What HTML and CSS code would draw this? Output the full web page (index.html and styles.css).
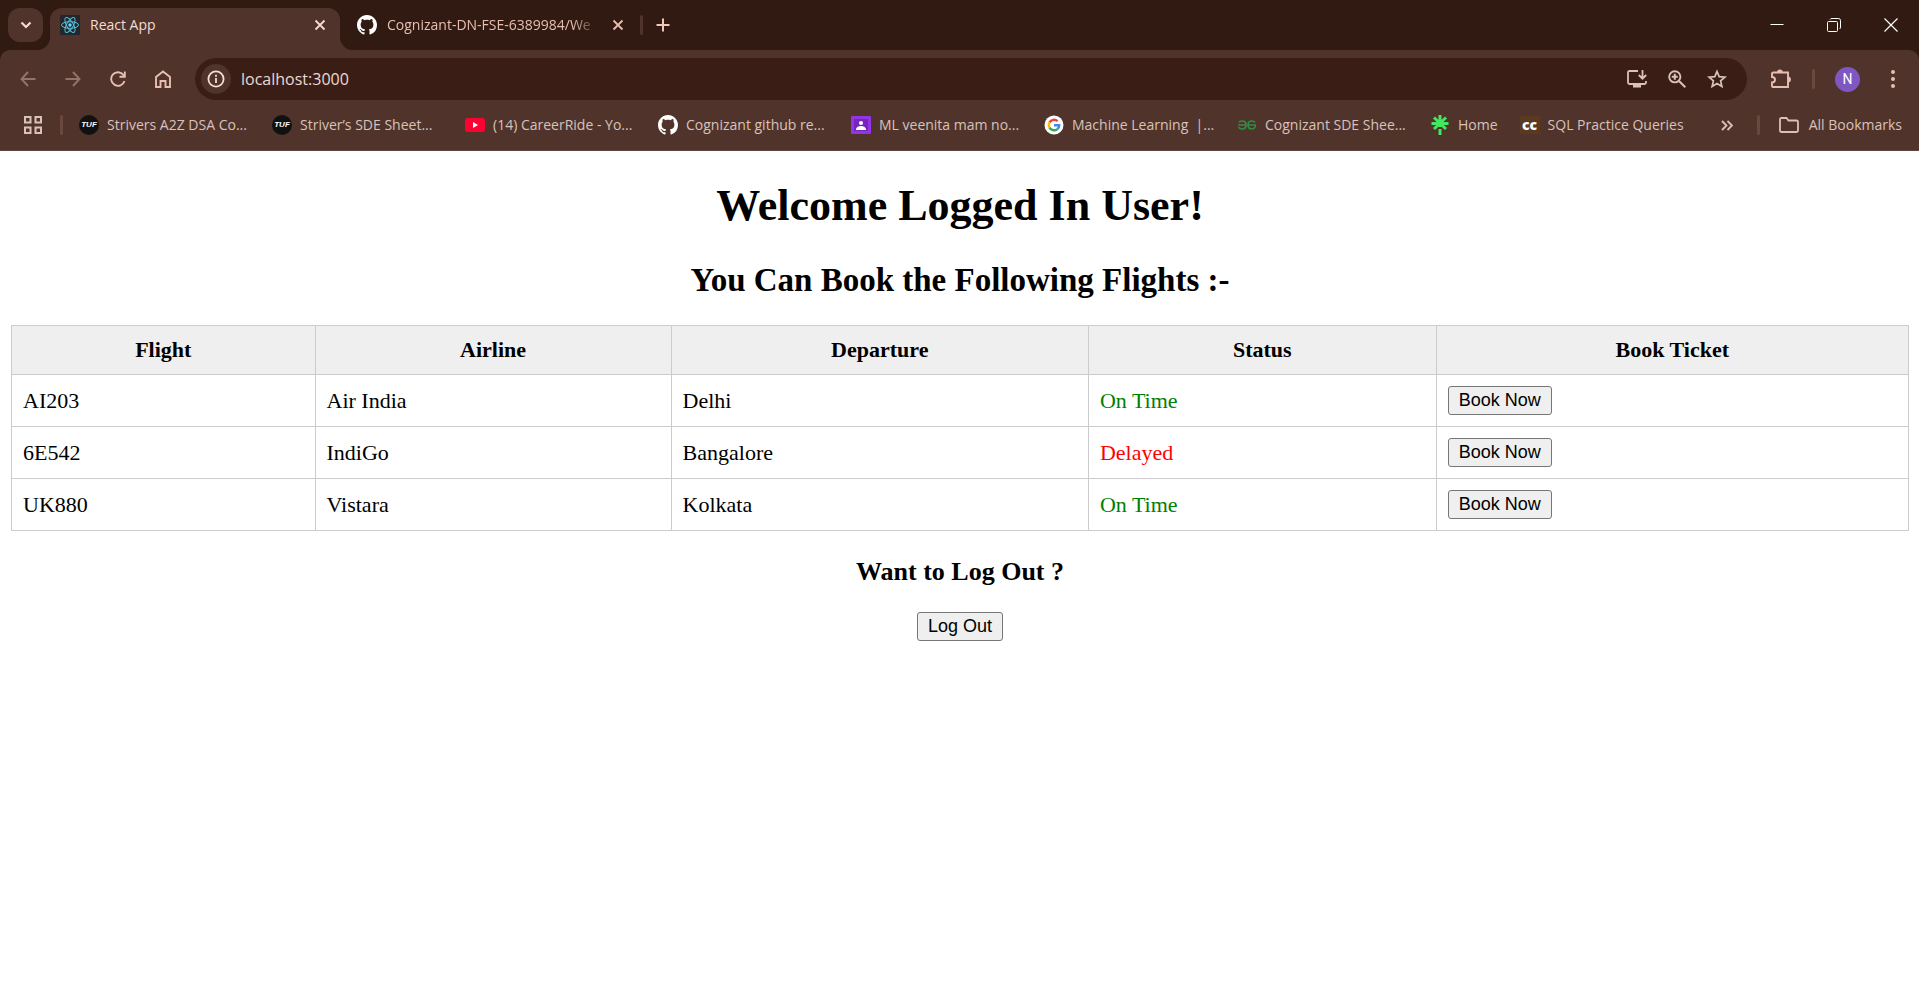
FILE: index.html
```html
<!DOCTYPE html>
<html lang="en">
<head>
<meta charset="utf-8">
<title>React App</title>
<link rel="stylesheet" href="styles.css">
</head>
<body>
<svg class="sprite" aria-hidden="true">
  <symbol id="github" viewBox="0 0 16 16"><path fill="#fff" d="M8 0C3.58 0 0 3.58 0 8c0 3.54 2.29 6.53 5.47 7.59.4.07.55-.17.55-.38 0-.19-.01-.82-.01-1.49-2.01.37-2.53-.49-2.69-.94-.09-.23-.48-.94-.82-1.13-.28-.15-.68-.52-.01-.53.63-.01 1.08.58 1.23.82.72 1.21 1.87.87 2.33.66.07-.52.28-.87.51-1.07-1.78-.2-3.64-.89-3.64-3.95 0-.87.31-1.59.82-2.15-.08-.2-.36-1.02.08-2.12 0 0 .67-.21 2.2.82.64-.18 1.32-.27 2-.27s1.36.09 2 .27c1.53-1.04 2.2-.82 2.2-.82.44 1.1.16 1.92.08 2.12.51.56.82 1.27.82 2.15 0 3.07-1.87 3.75-3.65 3.95.29.25.54.73.54 1.48 0 1.07-.01 1.93-.01 2.2 0 .21.15.46.55.38A8.01 8.01 0 0 0 16 8c0-4.42-3.58-8-8-8z"/></symbol>
  <symbol id="cross" viewBox="0 0 12 12"><path d="M1.5 1.5l9 9M10.5 1.5l-9 9" stroke="currentColor" stroke-width="1.8"/></symbol>
</svg>

<header class="browser">
  <div class="tabstrip">
    <button class="tab-search" aria-label="Search tabs"><svg width="12" height="12" viewBox="0 0 12 12"><path d="M1.5 3.5L6 8l4.500-4.500" fill="none" stroke="currentColor" stroke-width="2.200"/></svg></button>
    <div class="tab tab-active">
      <svg width="20" height="20" viewBox="0 0 20 20"><rect width="20" height="20" rx="1" fill="#23272b"/><g fill="none" stroke="#53c1de" stroke-width="1"><ellipse cx="10" cy="10" rx="8.500" ry="3.300"/><ellipse cx="10" cy="10" rx="8.500" ry="3.300" transform="rotate(60 10 10)"/><ellipse cx="10" cy="10" rx="8.500" ry="3.300" transform="rotate(120 10 10)"/></g><circle cx="10" cy="10" r="1.700" fill="#61dafb"/></svg>
      <span class="tab-title">React App</span>
      <button class="tab-close" aria-label="Close tab"><svg width="12" height="12"><use href="#cross"/></svg></button>
    </div>
    <div class="tab tab-idle">
      <svg width="20" height="20"><use href="#github"/></svg>
      <span class="tab-title tab-fade">Cognizant-DN-FSE-6389984/We</span>
      <button class="tab-close" aria-label="Close tab"><svg width="12" height="12"><use href="#cross"/></svg></button>
    </div>
    <span class="divider"></span>
    <button class="tab-new" aria-label="New tab"><svg width="14" height="14" viewBox="0 0 14 14"><path d="M7 .5v13M.5 7h13" stroke="currentColor" stroke-width="2"/></svg></button>
    <div class="window-controls">
      <button aria-label="Minimize"><svg width="14" height="14" viewBox="0 0 14 14"><path d="M.5 6.500h13" stroke="#fff"/></svg></button>
      <button aria-label="Restore"><svg width="14" height="14" viewBox="0 0 14 14"><g fill="none" stroke="#fff"><rect x=".5" y="3.500" width="10" height="10" rx="1"/><path d="M3 1.500Q3.500.5 5 .5h6.500q2 0 2 2V9q0 1.500-1 2"/></g></svg></button>
      <button aria-label="Close"><svg width="14" height="14" viewBox="0 0 14 14"><path d="M.5.5l13 13M13.500.5l-13 13" stroke="#fff" stroke-width="1.200"/></svg></button>
    </div>
  </div>

  <div class="toolbar">
    <button class="tool dim" aria-label="Back"><svg width="16" height="16" viewBox="0 0 16 16"><path d="M15.500 8H2M8 1L1.500 8 8 15" fill="none" stroke="currentColor" stroke-width="1.900"/></svg></button>
    <button class="tool dim" aria-label="Forward"><svg width="16" height="16" viewBox="0 0 16 16"><path d="M.5 8H14M8 1l6.500 7L8 15" fill="none" stroke="currentColor" stroke-width="1.900"/></svg></button>
    <button class="tool" aria-label="Reload"><svg width="16" height="16" viewBox="0 0 16 16"><path d="M14.500 10A6.800 6.800 0 1 1 13.500 4l1 1.500M14.800.5v5.300H9.500" fill="none" stroke="currentColor" stroke-width="1.900"/></svg></button>
    <button class="tool" aria-label="Home"><svg width="16" height="18" viewBox="0 0 16 18"><path d="M1 7l7-5.500L15 7v10h-4.500v-6h-5v6H1z" fill="none" stroke="currentColor" stroke-width="1.900"/></svg></button>
    <div class="omnibox">
      <button class="site-info" aria-label="Site information"><svg width="18" height="18" viewBox="0 0 18 18"><circle cx="9" cy="9" r="7.600" fill="none" stroke="currentColor" stroke-width="1.800"/><path d="M9 8v5M9 4.800v2" stroke="currentColor" stroke-width="1.800"/></svg></button>
      <input class="address" type="text" value="localhost:3000" aria-label="Address">
      <button class="omni-action" aria-label="Install app"><svg width="20" height="20" viewBox="0 0 20 20"><path d="M11 2H2.500Q1 2 1 3.500v10Q1 15 2.500 15h15q1.500 0 1.500-1.500V12M15.500 1v8M11.800 6l3.700 3.700L19.200 6" fill="none" stroke="currentColor" stroke-width="1.800"/><path d="M6 15h8v3.500H6z" fill="currentColor"/></svg></button>
      <button class="omni-action" aria-label="Zoom"><svg width="18" height="18" viewBox="0 0 18 18"><path d="M11 11l6.300 6.300M3.800 6.800h6M6.800 3.800v6" stroke="currentColor" stroke-width="2"/><circle cx="6.800" cy="6.800" r="5.600" fill="none" stroke="currentColor" stroke-width="1.900"/></svg></button>
      <button class="omni-action" aria-label="Bookmark this tab"><svg width="20" height="20" viewBox="0 0 20 20"><path d="M10 2.500l2.200 5.200 5.700.5-4.300 3.700 1.300 5.600L10 14.500l-4.900 3 1.300-5.600-4.300-3.700 5.700-.5z" fill="none" stroke="currentColor" stroke-width="1.700"/></svg></button>
    </div>
    <button class="tool" aria-label="Extensions"><svg width="22" height="22" viewBox="0 0 22 22"><path d="M3.500 4.500h14.500v14.500H3Q2 19 2 18v-3.500c4 0 4-5.500 0-5.500V5.500q0-1 1.500-1z" fill="none" stroke="currentColor" stroke-width="1.900"/><path d="M7 4.500a2.900 2.900 0 0 1 5.800 0zM18 8.500a2.900 2.900 0 0 1 0 5.800z" fill="currentColor"/></svg></button>
    <span class="divider"></span>
    <button class="tool" aria-label="Profile"><span class="avatar">N</span></button>
    <button class="tool" aria-label="Menu"><svg width="4" height="18" viewBox="0 0 4 18"><g fill="currentColor"><circle cx="2" cy="2" r="2"/><circle cx="2" cy="9" r="2"/><circle cx="2" cy="16" r="2"/></g></svg></button>
  </div>

  <nav class="bookmarks">
    <button class="apps" aria-label="Apps"><svg width="18" height="18" viewBox="0 0 18 18"><path d="M1 1h5.500v5.500H1zM11.500 1H17v5.500h-5.500zM1 11.500h5.500V17H1zM11.500 11.500H17V17h-5.500z" fill="none" stroke="currentColor" stroke-width="2"/></svg></button>
    <span class="divider"></span>
    <div class="bookmark-list">
      <a class="bookmark long" href="#"><span class="tuf">TUF</span>Strivers A2Z DSA Co...</a>
      <a class="bookmark long" href="#"><span class="tuf">TUF</span>Striver’s SDE Sheet...</a>
      <a class="bookmark long" href="#"><svg width="20" height="20" viewBox="0 0 20 20"><rect y="3" width="20" height="14" rx="3" fill="#ff0033"/><path d="M8 7l5 3-5 3z" fill="#fff"/></svg>(14) CareerRide - Yo...</a>
      <a class="bookmark long" href="#"><svg width="20" height="20"><use href="#github"/></svg>Cognizant github re...</a>
      <a class="bookmark long" href="#"><svg width="20" height="20" viewBox="0 0 20 20"><rect y="1" width="20" height="18" rx="1" fill="#9334e6"/><rect x="3" y="4" width="14" height="12" fill="#7627bb"/><circle cx="10" cy="8" r="2" fill="#fff"/><path d="M5 15v-1q1-3 5-3t5 3v1z" fill="#fff"/></svg>ML veenita mam no...</a>
      <a class="bookmark long" href="#"><svg width="20" height="20" viewBox="0 0 20 20"><circle cx="10" cy="10" r="9.500" fill="#fff"/><g fill="none" stroke-width="2.400"><path d="M13.600 6.200A5.200 5.200 0 0 0 5.500 7.400" stroke="#ea4335"/><path d="M5.500 7.400a5.200 5.200 0 0 0 0 5.200" stroke="#fbbc05"/><path d="M5.500 12.600a5.200 5.200 0 0 0 7.900 1.500" stroke="#34a853"/><path d="M13.400 14.100a5.200 5.200 0 0 0 1.800-3.900H10" stroke="#4285f4"/></g></svg><span class="pre">Machine Learning  |...</span></a>
      <a class="bookmark long" href="#"><svg width="20" height="20" viewBox="0 0 20 20"><path d="M1 10h8.500M10.500 10H19M2 7.500Q3 6 5 6q4 0 4 4t-4 4q-2.500 0-3.500-1.800M18 7.500Q17 6 15 6q-4 0-4 4t4 4q3 0 3.500-4" fill="none" stroke="#2f8d46" stroke-width="1.700"/></svg>Cognizant SDE Shee...</a>
      <a class="bookmark" href="#"><svg width="20" height="20" viewBox="0 0 20 20"><path d="M10 0v12M1.500 8.500h17M4 2.500l12 11.500M16 2.500L4 14M10 14v6" stroke="#43e660" stroke-width="3"/></svg>Home</a>
      <a class="bookmark" href="#"><span class="codechef">cc</span>SQL Practice Queries</a>
    </div>
    <button class="overflow" aria-label="More bookmarks"><svg width="12" height="11" viewBox="0 0 12 11"><path d="M1 1l4.500 4.500L1 10M6.500 1L11 5.500 6.500 10" fill="none" stroke="currentColor" stroke-width="1.800"/></svg></button>
    <span class="divider"></span>
    <a class="bookmark all" href="#"><svg width="20" height="16" viewBox="0 0 20 16"><path d="M2.500 1H7.500l2 2.500h8Q19 3.500 19 5v8.500q0 1.500-1.500 1.500h-15Q1 15 1 13.500v-11Q1 1 2.500 1z" fill="none" stroke="currentColor" stroke-width="1.800"/></svg>All Bookmarks</a>
  </nav>
</header>

<main class="page">
  <h1>Welcome Logged In User!</h1>
  <h2>You Can Book the Following Flights :-</h2>
  <table class="flights">
    <colgroup><col class="col-flight"><col class="col-airline"><col class="col-departure"><col class="col-status"><col></colgroup>
    <thead><tr><th>Flight</th><th>Airline</th><th>Departure</th><th>Status</th><th>Book Ticket</th></tr></thead>
    <tbody>
      <tr><td>AI203</td><td>Air India</td><td>Delhi</td><td class="on-time">On Time</td><td><button class="action">Book Now</button></td></tr>
      <tr><td>6E542</td><td>IndiGo</td><td>Bangalore</td><td class="delayed">Delayed</td><td><button class="action">Book Now</button></td></tr>
      <tr><td>UK880</td><td>Vistara</td><td>Kolkata</td><td class="on-time">On Time</td><td><button class="action">Book Now</button></td></tr>
    </tbody>
  </table>
  <h3>Want to Log Out ?</h3>
  <button class="action logout">Log Out</button>
</main>
</body>
</html>
```
FILE: styles.css
```css
* { box-sizing: border-box; }
body { margin: 0; background: #fff; color: #000; }
.sprite { position: absolute; width: 0; height: 0; }

/* Browser chrome */
.browser {
  background: #301a11;
  color: #f2dcd5;
  font: 14px/20px "Open Sans", "Noto Sans", sans-serif;
}
.browser button {
  display: flex;
  flex: none;
  align-items: center;
  justify-content: center;
  padding: 0;
  border: 0;
  background: none;
  color: inherit;
}
.browser svg { display: block; flex: none; }
.divider { flex: none; width: 3px; height: 20px; border-radius: 2px; background: #6a483e; }

.tabstrip { display: flex; align-items: center; height: 50px; padding-left: 8px; }
.browser .tab-search { width: 35px; height: 34px; border-radius: 12px; background: #50342b; }
.tab { display: flex; align-items: center; gap: 10px; height: 42px; padding: 0 10px; }
.tab-active {
  position: relative;
  align-self: flex-end;
  width: 290px;
  margin-left: 7px;
  padding-bottom: 8px;
  border-radius: 12px 12px 0 0;
  background: #50342b;
}
.tab-active::before, .tab-active::after {
  content: "";
  position: absolute;
  bottom: 0;
  width: 14px;
  height: 14px;
}
.tab-active::before { right: 100%; background: radial-gradient(circle at 0 0, transparent 14px, #50342b 15px); }
.tab-active::after { left: 100%; background: radial-gradient(circle at 100% 0, transparent 14px, #50342b 15px); }
.tab-idle { width: 298px; padding-left: 17px; color: #e7bfb1; }
.tab-title { flex: 1; overflow: hidden; white-space: nowrap; }
.tab-fade { -webkit-mask-image: linear-gradient(to right, #000 88%, transparent); mask-image: linear-gradient(to right, #000 88%, transparent); }
.browser .tab-close { width: 20px; height: 20px; }
.tabstrip > .divider { margin-left: 2px; background: #50342b; }
.browser .tab-new { width: 40px; height: 34px; color: #f2c8ba; }
.window-controls { display: flex; margin-left: auto; }
.browser .window-controls button { width: 57px; height: 48px; }

.toolbar {
  display: flex;
  align-items: center;
  padding: 8px 4px 0 5px;
  border-radius: 10px 10px 0 0;
  background: #50342b;
  color: #e7bfb1;
}
.browser .tool { width: 45px; height: 42px; }
.browser .dim { color: #94736a; }
.omnibox {
  display: flex;
  flex: 1;
  align-items: center;
  height: 42px;
  margin: 0 11px 0 10px;
  padding: 0 10px 0 6px;
  border-radius: 21px;
  background: #3a1e16;
  color: #d8c2bb;
}
.browser .site-info { width: 30px; height: 30px; border-radius: 50%; background: #50342b; color: #f2dcd5; }
.address {
  flex: 1;
  min-width: 0;
  margin-left: 10px;
  padding: 0;
  border: 0;
  outline: 0;
  background: none;
  color: #ecd9d3;
  font: 16px/24px "Open Sans", "Noto Sans", sans-serif;
}
.browser .omni-action { width: 40px; height: 40px; }
.toolbar > .divider { margin: 0 10px 0 9px; }
.avatar {
  width: 25px;
  border-radius: 50%;
  background: #7e57c2;
  color: #fff;
  font: 14px/25px Roboto, sans-serif;
  text-align: center;
}

.bookmarks {
  display: flex;
  align-items: center;
  height: 51px;
  padding-right: 17px;
  border-bottom: 1px solid #5c4640;
  background: #50342b;
  color: #d8c2bb;
}
.browser .apps { width: 37px; height: 34px; margin: 0 9px 0 14px; }
.bookmark-list { display: flex; flex: 1; gap: 22px; margin-left: 16px; overflow: hidden; }
.bookmark {
  display: flex;
  flex: none;
  align-items: center;
  gap: 8px;
  color: inherit;
  text-decoration: none;
  white-space: nowrap;
}
.long { width: 171px; }
.pre { white-space: pre; }
.all { gap: 10px; margin-left: 19px; }
.browser .overflow { width: 34px; height: 34px; margin-right: 13px; }
.tuf {
  width: 20px;
  border-radius: 50%;
  background: #111;
  color: #fff;
  font: italic bold 8px/20px "Liberation Sans", sans-serif;
  text-align: center;
}
.codechef {
  width: 20px;
  background: #5b3820;
  color: #fff;
  font: 800 14px/18px "Open Sans", sans-serif;
  text-align: center;
}

/* Page content */
.page {
  padding: 30px 10px 11px 11px;
  font: 22px/25px "Liberation Serif", "Times New Roman", serif;
  text-align: center;
}
h1, h2, h3 { margin: 0; }
h1 { font-size: 44px; line-height: 50px; }
h2 { margin: 30px 0 26px; font-size: 33px; line-height: 38px; }
h3 { margin: 26px 0; font-size: 26px; line-height: 29px; }
.flights { width: 100%; border-collapse: collapse; table-layout: fixed; }
.flights th, .flights td { padding: 11px; border: 1px solid #ccc; }
.flights th { line-height: 26px; background: #efefef; }
.flights td { text-align: left; }
.col-flight { width: 16%; }
.col-airline { width: 18.77%; }
.col-departure { width: 22%; }
.col-status { width: 18.33%; }
.on-time { color: green; }
.delayed { color: red; }
.action {
  display: block;
  padding: 3px 10px;
  border: 1px solid #767676;
  border-radius: 3px;
  background: #efefef;
  color: #000;
  font: 18px/21px "Liberation Sans", Arial, sans-serif;
}
.logout { margin: 0 auto; }
```
